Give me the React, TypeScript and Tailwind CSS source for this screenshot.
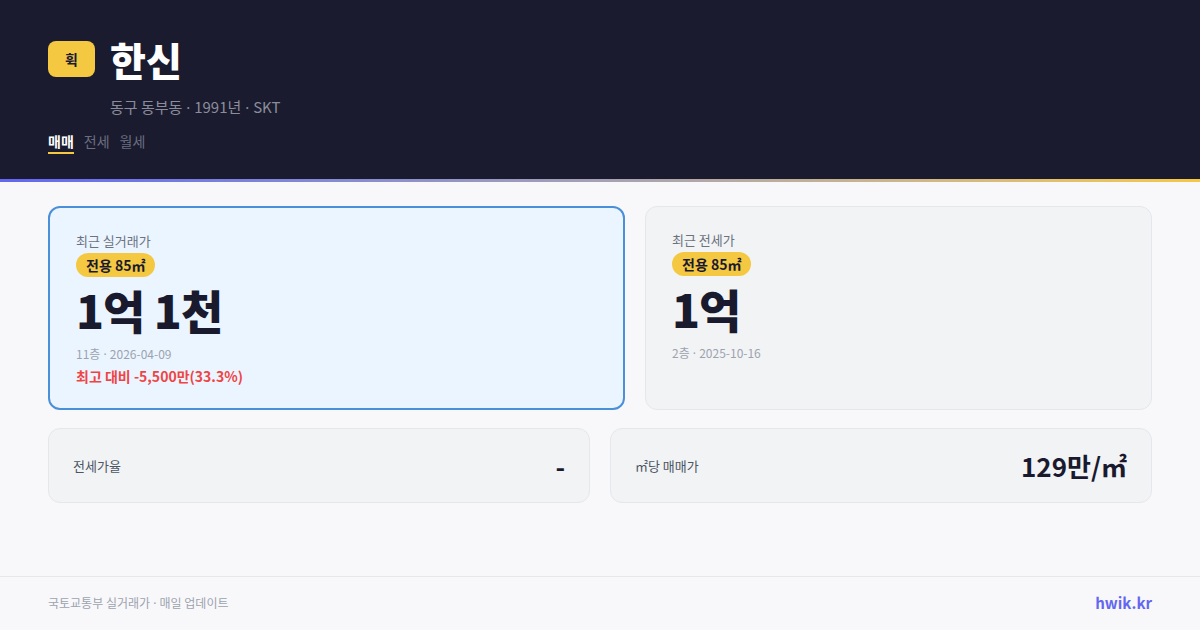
const font = { fontFamily: '"Noto Sans CJK KR", "Noto Sans", sans-serif' };

const Dot = () => <span style={{ fontFamily: '"Noto Sans", sans-serif' }}> · </span>;

const PriceCard = ({
  label,
  price,
  meta,
  diff,
  active,
  className,
}: {
  label: string;
  price: string;
  meta: React.ReactNode;
  diff?: string;
  active?: boolean;
  className: string;
}) => (
  <div
    className={`rounded-xl h-[204px] ${className} ${
      active
        ? 'bg-[#ebf5ff] border-2 border-[#4a90d9] px-[26px] pt-[24px]'
        : 'bg-[#f2f3f5] border border-[#e5e7eb] px-[26px] pt-[24px]'
    }`}
  >
    <div className="text-[13px] leading-[18px] text-[#6b7280]">{label}</div>
    <div className="mt-[3px] inline-flex items-center h-[24px] px-[10px] rounded-full bg-[#f5c842] text-[14px] font-bold text-[#1a1a2e]">
      전용 85㎡
    </div>
    <div className="mt-[2px] text-[46px] leading-[60px] font-black tracking-[-1px] text-[#1a1a2e]">{price}</div>
    <div className="mt-[6px] text-[12px] leading-[18px] text-[#9ca3af]">{meta}</div>
    {diff && <div className="mt-[2px] text-[14px] leading-[20px] font-bold text-[#ef4444]">{diff}</div>}
  </div>
);

const StatCard = ({ label, value }: { label: string; value: string }) => (
  <div className="flex-1 h-[75px] rounded-xl bg-[#f2f3f5] border border-[#e5e7eb] flex items-center justify-between px-[24px]">
    <span className="text-[13px] text-[#4b5563]">{label}</span>
    <span className="text-[26px] font-bold text-[#1a1a2e]">{value}</span>
  </div>
);

export default function App() {
  return (
    <div className="w-[1200px] h-[630px] bg-[#f8f8fa] flex flex-col overflow-hidden" style={font}>
      <header className="h-[179px] bg-[#1a1b2e] px-[48px] pt-[33px]">
        <div className="flex items-center gap-[15px]">
          <div className="w-[47px] h-[36px] rounded-lg bg-[#f5c842] flex items-center justify-center text-[14px] font-bold text-[#1a1a2e]">
            휙
          </div>
          <h1 className="text-[39px] leading-[52px] font-black text-white">한신</h1>
        </div>
        <div className="mt-[12px] ml-[62px] text-[15px] leading-[20px] text-[#8b8d9c]">
          동구 동부동<Dot />1991년<Dot />SKT
        </div>
        <nav className="mt-[15px] flex gap-[10px] text-[14px] leading-[18px]">
          <span className="text-white font-bold border-b-2 border-[#f5c842] pb-[2px]">매매</span>
          <span className="text-[#6b6e80]">전세</span>
          <span className="text-[#6b6e80]">월세</span>
        </nav>
      </header>
      <div className="h-[3px] bg-gradient-to-r from-[#6366f1] to-[#f5c842]" />
      <main className="flex-1 px-[48px] pt-[24px]">
        <div className="flex gap-[20px]">
          <PriceCard
            className="w-[577px]"
            active
            label="최근 실거래가"
            price="1억 1천"
            meta={<>11층<Dot />2026-04-09</>}
            diff="최고 대비 -5,500만(33.3%)"
          />
          <PriceCard className="flex-1" label="최근 전세가" price="1억" meta={<>2층<Dot />2025-10-16</>} />
        </div>
        <div className="mt-[18px] flex gap-[20px]">
          <StatCard label="전세가율" value="-" />
          <StatCard label="㎡당 매매가" value="129만/㎡" />
        </div>
      </main>
      <footer className="h-[54px] border-t border-[#e5e7eb] px-[48px] flex items-center justify-between">
        <span className="text-[12px] text-[#9ca3af]">
          국토교통부 실거래가<Dot />매일 업데이트
        </span>
        <span className="text-[15px] font-bold text-[#6366f1]">hwik.kr</span>
      </footer>
    </div>
  );
}
